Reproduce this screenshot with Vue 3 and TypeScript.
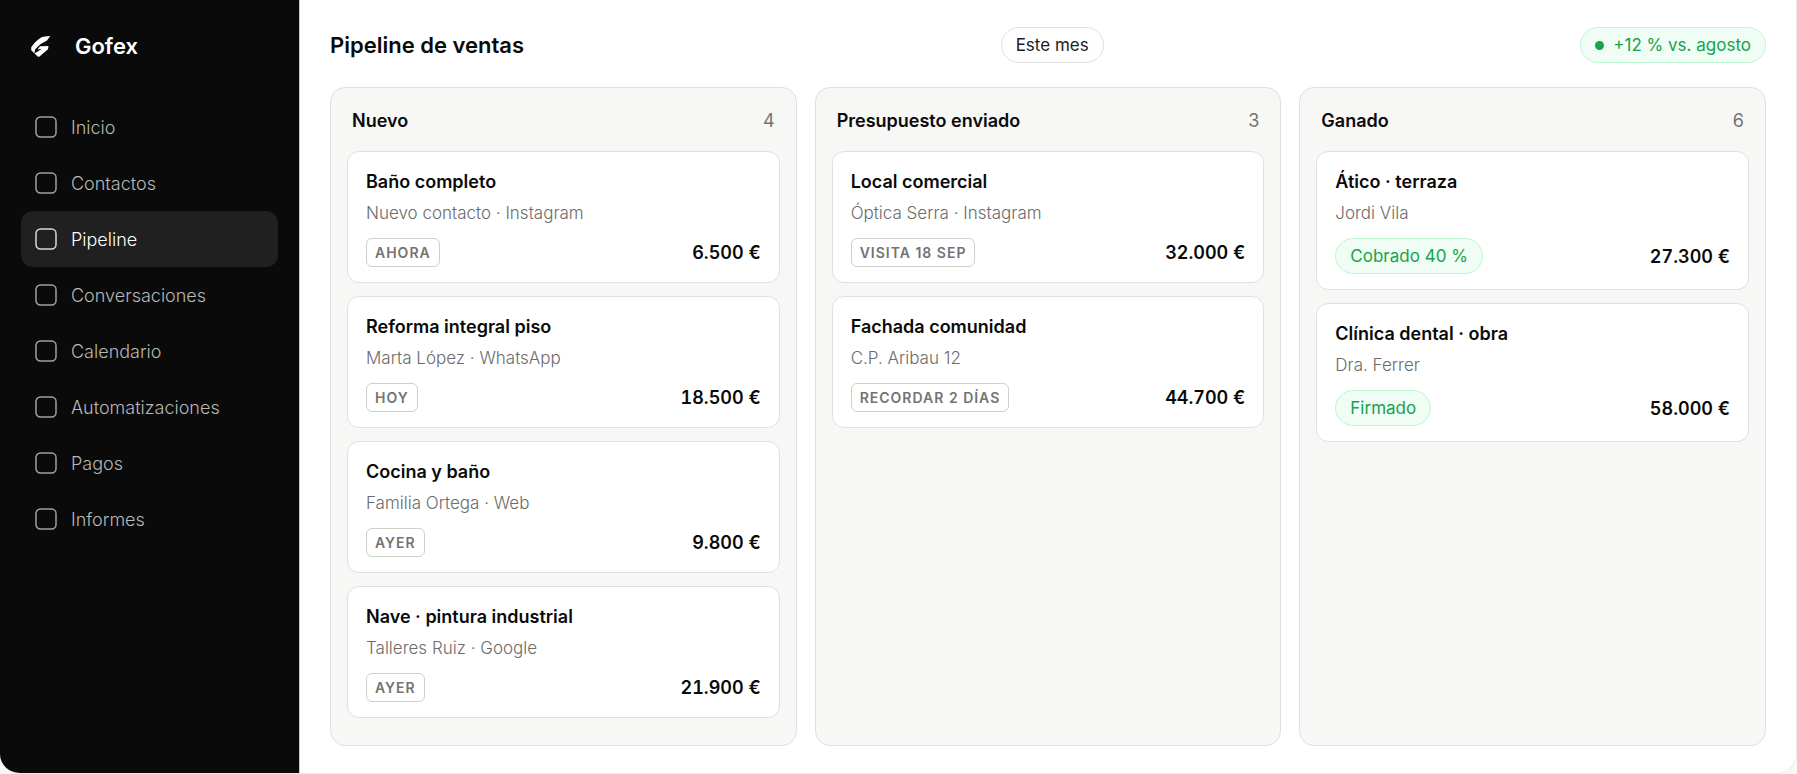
<script setup lang="ts">
interface Deal {
  title: string
  contact: string
  tag: string
  won?: boolean
  amount: string
}

interface Stage {
  name: string
  count: number
  deals: Deal[]
}

const sections: string[] = [
  'Inicio',
  'Contactos',
  'Pipeline',
  'Conversaciones',
  'Calendario',
  'Automatizaciones',
  'Pagos',
  'Informes',
]
const current = 'Pipeline'

const stages: Stage[] = [
  {
    name: 'Nuevo',
    count: 4,
    deals: [
      { title: 'Baño completo', contact: 'Nuevo contacto · Instagram', tag: 'AHORA', amount: '6.500 €' },
      { title: 'Reforma integral piso', contact: 'Marta López · WhatsApp', tag: 'HOY', amount: '18.500 €' },
      { title: 'Cocina y baño', contact: 'Familia Ortega · Web', tag: 'AYER', amount: '9.800 €' },
      { title: 'Nave · pintura industrial', contact: 'Talleres Ruiz · Google', tag: 'AYER', amount: '21.900 €' },
    ],
  },
  {
    name: 'Presupuesto enviado',
    count: 3,
    deals: [
      { title: 'Local comercial', contact: 'Óptica Serra · Instagram', tag: 'VISITA 18 SEP', amount: '32.000 €' },
      { title: 'Fachada comunidad', contact: 'C.P. Aribau 12', tag: 'RECORDAR 2 DÍAS', amount: '44.700 €' },
    ],
  },
  {
    name: 'Ganado',
    count: 6,
    deals: [
      { title: 'Ático · terraza', contact: 'Jordi Vila', tag: 'Cobrado 40 %', won: true, amount: '27.300 €' },
      { title: 'Clínica dental · obra', contact: 'Dra. Ferrer', tag: 'Firmado', won: true, amount: '58.000 €' },
    ],
  },
]
</script>

<template>
  <div class="window">
    <aside class="sidebar">
      <div class="brand">
        <svg class="logo" viewBox="0 0 20 21" aria-hidden="true">
          <path
            d="M19.300 0C15.500.2 12.500.5 10.500 1.300C8 2.800 5.500 5 3.300 7.200L.2 11.300V14.300L3.300 17.300L4.200 13.300L9.300 8.300L16 4.400Z"
          />
          <path
            d="M9 10.300L17.500 9.900L17 13.300L8.200 20.800H7L3.300 17.200L6.500 15.800L10.800 12.800L6.600 13.400Z"
          />
        </svg>
        <span class="brand-name">Gofex</span>
      </div>
      <nav class="nav" aria-label="Secciones">
        <a
          v-for="section in sections"
          :key="section"
          href="#"
          class="nav-link"
          :class="{ active: section === current }"
          :aria-current="section === current ? 'page' : undefined"
        >
          <svg class="nav-icon" viewBox="0 0 22 22" aria-hidden="true">
            <rect x="1" y="1" width="20" height="20" rx="4.500" />
          </svg>
          <span>{{ section }}</span>
        </a>
      </nav>
    </aside>

    <main class="main">
      <header class="topbar">
        <h1 class="heading">Pipeline de ventas</h1>
        <button type="button" class="pill">Este mes</button>
        <span class="pill green"><i class="dot"></i>+12 % vs. agosto</span>
      </header>

      <div class="board">
        <section v-for="stage in stages" :key="stage.name" class="stage">
          <div class="stage-head">
            <h2 class="stage-name">{{ stage.name }}</h2>
            <span class="stage-count">{{ stage.count }}</span>
          </div>
          <article v-for="deal in stage.deals" :key="deal.title" class="card">
            <h3 class="card-title">{{ deal.title }}</h3>
            <p class="card-contact">{{ deal.contact }}</p>
            <div class="card-foot">
              <span :class="deal.won ? 'pill green' : 'tag'">{{ deal.tag }}</span>
              <strong class="amount">{{ deal.amount }}</strong>
            </div>
          </article>
        </section>
      </div>
    </main>
  </div>
</template>

<style>
body {
  margin: 0;
  background: #f8f8f8;
}
</style>

<style scoped>
.window {
  box-sizing: border-box;
  display: flex;
  min-height: 100vh;
  overflow: hidden;
  border: solid #ececec;
  border-width: 0 1px 1px 0;
  border-radius: 0 0 20px 20px;
  background: #fff;
  color: #0a0a0a;
  font-family: Inter, "Liberation Sans", sans-serif;
  font-size: 18px;
}

.sidebar {
  box-sizing: border-box;
  flex: 0 0 300px;
  padding: 32px 21px;
  border-right: 1px solid #c8c8c8;
  background: #0a0a0a;
}

.brand {
  display: flex;
  align-items: center;
  gap: 24px;
  height: 28px;
  margin-bottom: 39px;
  padding-left: 10px;
  color: #fff;
}

.logo {
  width: 20px;
  height: 21px;
  fill: #fff;
}

.brand-name {
  font-size: 22px;
  font-weight: 600;
}

.nav {
  display: flex;
  flex-direction: column;
}

.nav-link {
  display: flex;
  align-items: center;
  gap: 14px;
  height: 56px;
  padding: 0 14px;
  border-radius: 12px;
  color: #b8b8b8;
  font-weight: 300;
  text-decoration: none;
}

.nav-link.active {
  background: #202020;
  color: #fff;
}

.nav-icon {
  width: 22px;
  height: 22px;
  fill: none;
  stroke: #a0a0a0;
  stroke-width: 1.5;
}

.active .nav-icon {
  stroke: #d8d8d8;
}

.main {
  display: flex;
  flex: 1;
  flex-direction: column;
  gap: 24px;
  min-width: 0;
  padding: 27px 30px;
}

.topbar {
  display: flex;
  align-items: center;
  justify-content: space-between;
}

.heading,
.stage-name,
.card-title,
.card-contact {
  margin: 0;
}

.heading {
  font-size: 22px;
  font-weight: 600;
  line-height: 28px;
}

.pill {
  box-sizing: border-box;
  display: inline-flex;
  align-items: center;
  gap: 9px;
  height: 36px;
  padding: 0 14px;
  border: 1px solid #e0e0e0;
  border-radius: 18px;
  background: #fff;
  color: #1c1c1c;
  font-family: inherit;
  font-size: 17px;
  font-weight: 400;
  white-space: nowrap;
}

.pill.green {
  border-color: #bbf7d0;
  background: #f0fdf4;
  color: #16a34a;
}

.dot {
  width: 9px;
  height: 9px;
  border-radius: 50%;
  background: #16a34a;
}

.board {
  display: grid;
  flex: 1;
  grid-template-columns: repeat(3, minmax(0, 1fr));
  gap: 18px;
}

.stage {
  display: flex;
  flex-direction: column;
  gap: 13px;
  padding: 15px 16px;
  border: 1px solid #e0e0e0;
  border-radius: 15px;
  background: #f7f7f5;
}

.stage-head {
  display: flex;
  align-items: center;
  justify-content: space-between;
  height: 35px;
  padding: 0 5px;
}

.stage-name,
.card-title {
  font-size: 18px;
  font-weight: 600;
}

.stage-count {
  color: #737373;
}

.card {
  padding: 17px 18px 15px;
  border: 1px solid #e0e0e0;
  border-radius: 12px;
  background: #fff;
}

.card-title {
  line-height: 26px;
}

.card-contact {
  margin: 4px 0 11px;
  color: #6b6b6b;
  font-size: 17px;
  font-weight: 300;
  line-height: 28px;
}

.card-foot {
  display: flex;
  align-items: center;
  justify-content: space-between;
}

.tag {
  padding: 0 8px;
  border: 1px solid #d0d0ca;
  border-radius: 6px;
  color: #737373;
  font-size: 14px;
  font-weight: 600;
  line-height: 27px;
  letter-spacing: 1px;
}

.amount {
  font-size: 18px;
  font-weight: 600;
  font-variant-numeric: tabular-nums;
}
</style>
